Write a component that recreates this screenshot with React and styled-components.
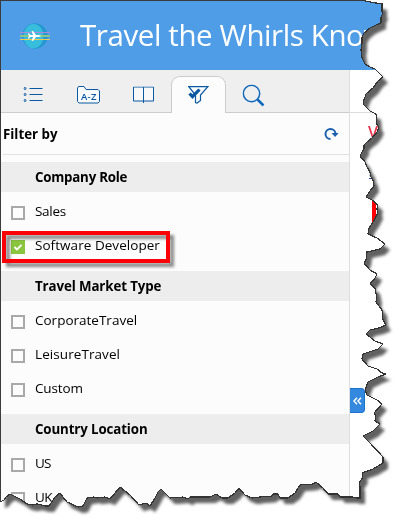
import React from "react";
import styled, { createGlobalStyle } from "styled-components";

const EDGE =
  "361,0 370,2 382,4 382,12 383,13 381,17 381,23 376,25 370,28 364,33 362,37 362,43 361,50 362,58 365,64 370,67 375,69 383,77 378,81 373,88 366,94 365,97 363,102 364,105 370,111 376,114 377,125 379,127 377,132 372,138 367,142 364,145 364,149 362,152 360,156 365,162 367,167 370,172 371,177 373,180 374,186 370,191 366,197 372,200 378,205 377,209 378,213 373,222 369,228 368,234 377,238 385,244 380,249 376,250 367,252 366,260 364,263 370,270 377,274 375,278 370,284 375,288 377,298 376,302 382,310 383,320 386,325 379,328 370,330 366,334 375,341 383,344 378,349 372,351 363,354 362,359 368,366 377,369 382,373 386,374 378,377 368,382 365,390 367,395 377,400 382,404 374,413 376,416 375,421 380,424 373,431 363,436 370,443 383,457 383,463 373,469 362,473 363,477 359,483 360,486 360,498 356,498 352,497 340,497 338,494 328,494 323,488 316,482 313,484 300,485 295,493 288,498 280,498 278,494 273,494 272,496 260,497 252,498 245,495 239,488 235,493 228,498 222,498 216,494 210,497 190,497 188,499 183,497 170,498 161,489 158,492 155,498 150,506 146,503 139,505 130,495 125,491 120,487 115,493 110,499 105,497 97,498 94,497 87,498 83,506 78,507 67,502 60,493 55,497 49,506 45,506 37,504 33,505 27,504 20,499 14,496 10,494 6,497 4,500 0,502";
const CLIP = `0,0 ${EDGE}`
  .split(" ")
  .map((p) => p.split(",").map((n) => `${n}px`).join(" "))
  .join(", ");

const Global = createGlobalStyle`
  * { box-sizing: border-box; }
  body { margin: 0; background: #fff; font-family: "Open Sans", "Noto Sans", sans-serif; }
`;
const Shell = styled.div`
  position: relative;
  width: 407px;
  height: 530px;
  overflow: hidden;
  background: #fff;
`;
const Shadow = styled.div`
  filter: drop-shadow(5px 6px 1.4px rgba(0, 0, 0, 0.62));
`;
const Page = styled.div`
  width: 407px;
  height: 530px;
  display: flex;
  flex-direction: column;
  background: #fff;
  border-left: 1px solid #3c3c3c;
  border-top: 1px solid #3c3c3c;
  clip-path: polygon(${CLIP});
`;
const TornLine = styled.svg`
  position: absolute;
  inset: 0;
`;
const Header = styled.header`
  flex: none;
  display: flex;
  align-items: center;
  height: 69px;
  padding-left: 19px;
  gap: 30px;
  background: #4f9de7;
`;
const Title = styled.h1`
  margin: 0;
  padding-bottom: 2px;
  color: #fff;
  font-size: 29.5px;
  font-weight: 500;
  line-height: 40px;
  white-space: nowrap;
  letter-spacing: -0.4px;
`;
const Body = styled.div`
  flex: 1;
  display: flex;
`;
const Sidebar = styled.aside`
  width: 349px;
  flex: none;
  border-right: 1px solid #dedede;
  background: #fcfcfc;
`;
const Main = styled.main`
  flex: 1;
  position: relative;
  padding-top: 42px;
`;
const Divider = styled.div`
  height: 1px;
  background: #dcdcdc;
`;
const Tabs = styled.nav`
  display: flex;
  align-items: flex-end;
  height: 43px;
  padding-left: 5px;
  background: #efefef;
  box-shadow: inset 0 -1px #cccccc;
`;
const Tab = styled.button`
  display: flex;
  align-items: center;
  justify-content: center;
  width: 55px;
  height: 37px;
  padding: 0;
  border: 1px solid ${(p) => (p.$active ? "#cccccc" : "transparent")};
  border-bottom: 0;
  border-radius: 9px 9px 0 0;
  background: ${(p) => (p.$active ? "#fcfcfc" : "transparent")};
`;
const FilterBar = styled.div`
  display: flex;
  align-items: center;
  justify-content: space-between;
  height: 42px;
  margin-left: 2px;
  padding: 0 10px 0 0;
  border-bottom: 1px solid #e3e3e3;
`;
const Bold = styled.span`
  font-size: 13.3px;
  font-weight: 700;
  line-height: 18px;
  color: #000;
  white-space: nowrap;
  letter-spacing: ${(p) => p.$track || "0"};
`;
const Groups = styled.div`
  padding-top: 7px;
`;
const GroupTitle = styled.div`
  display: flex;
  align-items: center;
  height: 30px;
  padding-left: 34px;
  background: #ededed;
`;
const Options = styled.div`
  padding: 4px 0 7px;
`;
const Option = styled.label`
  position: relative;
  display: flex;
  align-items: center;
  gap: 10px;
  height: 34px;
  padding-left: 10px;
`;
const Box = styled.span`
  display: flex;
  width: 14px;
  height: 14px;
  border: ${(p) => (p.$on ? "0" : "2px solid #a9a9a9")};
  background: ${(p) => (p.$on ? "#8bc53f" : "#fcfcfc")};
`;
const Label = styled.span`
  padding-bottom: 5px;
  font-size: 13.5px;
  line-height: 18px;
  color: #000;
  white-space: nowrap;
  letter-spacing: ${(p) => p.$track || "0"};
`;
const Highlight = styled.span`
  position: absolute;
  left: 1px;
  top: 1px;
  width: 168px;
  height: 32px;
  border: 4px solid #fb0007;
  filter: drop-shadow(4.5px 4.5px 1.5px rgba(0, 0, 0, 0.45));
`;
const Collapse = styled.button`
  position: absolute;
  left: 0;
  top: 318px;
  width: 15px;
  height: 25px;
  display: flex;
  align-items: center;
  justify-content: center;
  padding: 0;
  border: 1px solid #1873cc;
  border-left: 0;
  border-radius: 0 4px 4px 0;
  background: #3489de;
`;
const Snippets = styled.div`
  position: relative;
  padding-left: 18px;
  color: #e8344a;
  font-size: 16px;
  font-weight: 600;
  line-height: 38px;
`;
const LinkMark = styled.div`
  color: #2a4b93;
  font-size: 12px;
  font-weight: 400;
  line-height: 14px;
  margin: 15px 0 0 1px;
  text-decoration: underline;
`;
const RedMark = styled.div`
  width: 4px;
  height: 22px;
  margin: 20px 0 0 4px;
  background: #fb0007;
`;

const Logo = () => (
  <svg width="30" height="26" viewBox="0 0 30 26">
    <circle cx="15" cy="13" r="12.7" fill="#2698cf" />
    <ellipse cx="13.5" cy="13.2" rx="10" ry="12.2" fill="#38bddd" />
    <path d="M0 9.5h30" stroke="#aa8ed8" />
    <path d="M0 13h30" stroke="#8bc58b" strokeWidth="2" />
    <path d="M0 16.5h30" stroke="#f3ca4e" />
    <path d="M21 13c-.5-.9-2-1-5-1l-3-4h-1.500l1.500 4h-2.500L9 10.300H8l.8 2.700-.8 2.700h1l1.500-1.700H13l-1.500 4H13l3-4c3 0 4.500-.1 5-1z" fill="#fff" />
  </svg>
);
const ICONS = {
  list: (
    <svg width="20" height="16" viewBox="0 0 20 16" fill="none" stroke="#0b58a2">
      <path d="M6 2.500h13M6 8.500h13M6 14.500h13" />
      <circle cx="1.500" cy="2.500" r="1" />
      <circle cx="1.500" cy="8.500" r="1" />
      <circle cx="1.500" cy="14.500" r="1" />
    </svg>
  ),
  az: (
    <svg width="23" height="18" viewBox="0 0 23 18" fill="none" stroke="#0b58a2">
      <path d="M.5 15V2L1.500.5H7L9 3.500h12l1.500 1.500v10.500l-1.500 1.500H2L.5 15.500z" fill="#f8fbfd" />
      <text x="4" y="13.500" fill="#0b58a2" stroke="none" fontSize="9.500" fontWeight="600" fontFamily="Open Sans" textLength="15.500">A-Z</text>
    </svg>
  ),
  book: (
    <svg width="21" height="17" viewBox="0 0 21 17" fill="#f8f8f8" stroke="#0b58a2">
      <path d="M.5.5h20v14H.5zM10.500.5v16" />
    </svg>
  ),
  filter: (
    <svg width="21" height="18" viewBox="0 0 21 18" fill="none" stroke="#0b58a2">
      <path d="M.8.700h19L12.500 9v5.500L9 17l-1.500-.5V9z" strokeWidth="1.200" />
      <path d="M1.500 7.500l3 3.200L11.500 3.500" strokeWidth="3.200" />
    </svg>
  ),
  search: (
    <svg width="22" height="22" viewBox="0 0 22 22" fill="none" stroke="#1068bd">
      <circle cx="9" cy="9" r="8.200" strokeWidth="1.500" />
      <path d="M15 15l6 6" strokeWidth="2.500" />
    </svg>
  ),
};
const IconSlot = styled.span`
  display: flex;
  transform: translate(${(p) => p.$x}px, ${(p) => p.$y}px);
`;

const TABS = [
  ["list", -0.5, -1],
  ["az", 0, 0],
  ["book", 0, -0.5],
  ["filter", 0, 0],
  ["search", -0.5, 0.5],
];
const GROUPS = [
  {
    title: "Company Role",
    track: "-0.22px",
    items: [{ t: "Sales", track: "-0.3px" }, { t: "Software Developer", on: true, track: "0.05px" }],
  },
  {
    title: "Travel Market Type",
    track: "-0.1px",
    items: [{ t: "CorporateTravel" }, { t: "LeisureTravel", track: "0.08px" }, { t: "Custom", track: "-0.15px" }],
  },
  {
    title: "Country Location",
    track: "-0.12px",
    items: [{ t: "US", track: "-0.8px" }, { t: "UK", track: "-0.6px" }],
  },
];

export default function App() {
  return (
    <Shell>
      <Global />
      <Shadow>
        <Page>
          <Header>
            <Logo />
            <Title>Travel the Whirls Know</Title>
          </Header>
          <Body>
            <Sidebar>
              <Tabs>
                {TABS.map(([name, x, y]) => (
                  <Tab key={name} $active={name === "filter"} aria-label={name}>
                    <IconSlot $x={x} $y={y}>{ICONS[name]}</IconSlot>
                  </Tab>
                ))}
              </Tabs>
              <FilterBar>
                <Bold>Filter by</Bold>
                <svg width="15" height="14" viewBox="0 0 15 14">
                  <path d="M6.500 12A5 5 0 1 1 11.500 7" fill="none" stroke="#1b5fae" strokeWidth="2" />
                  <path d="M7.500 6h7.200l-3.600 4z" fill="#1b5fae" />
                </svg>
              </FilterBar>
              <Groups>
                {GROUPS.map((g) => (
                  <section key={g.title}>
                    <GroupTitle><Bold $track={g.track}>{g.title}</Bold></GroupTitle>
                    <Options>
                      {g.items.map((o) => (
                        <Option key={o.t}>
                          <Box $on={o.on}>
                            {o.on && (
                              <svg width="14" height="14" viewBox="0 0 14 14">
                                <path d="M3.500 7l2.500 2.500L10.500 4.800" fill="none" stroke="#fff" strokeWidth="1.800" />
                              </svg>
                            )}
                          </Box>
                          <Label $track={o.track}>{o.t}</Label>
                          {o.on && <Highlight />}
                        </Option>
                      ))}
                    </Options>
                  </section>
                ))}
              </Groups>
            </Sidebar>
            <Main>
              <Divider />
              <Snippets>
                V
                <LinkMark>a</LinkMark>
                <RedMark />
              </Snippets>
              <Collapse aria-label="collapse">
                <svg width="9" height="8" viewBox="0 0 9 8" fill="none" stroke="#fff" strokeWidth="1.500">
                  <path d="M4 .7L1 4l3 3.300M8 .7L5 4l3 3.300" />
                </svg>
              </Collapse>
            </Main>
          </Body>
        </Page>
      </Shadow>
      <TornLine width="407" height="530" viewBox="0 0 407 530" aria-hidden="true">
        <polyline points={EDGE} fill="none" stroke="#333" strokeWidth="1.200" shapeRendering="crispEdges" />
      </TornLine>
    </Shell>
  );
}
